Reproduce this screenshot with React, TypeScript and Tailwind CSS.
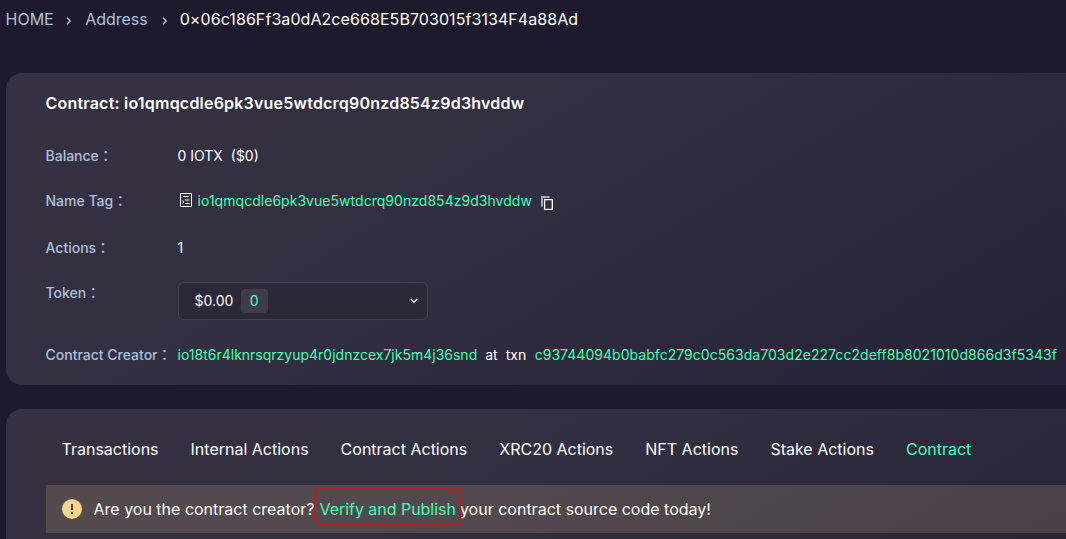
import type { ReactNode } from "react";

const TABS = ["Transactions", "Internal Actions", "Contract Actions", "XRC20 Actions", "NFT Actions", "Stake Actions", "Contract"];

function Chevron({ className }: { className: string }) {
  return (
    <svg className={className} viewBox="0 0 8 8" fill="none" stroke="currentColor" strokeWidth="1.4">
      <path d="M2 0.8 L5.2 4 L2 7.2" />
    </svg>
  );
}

function Row({ label, className, children }: { label: string; className: string; children: ReactNode }) {
  return (
    <div className={`flex whitespace-nowrap text-sm leading-5 ${className}`}>
      <div className="w-[132px] shrink-0 font-medium text-[#afc0dc]">
        {label}
        <span className="font-['Noto_Sans_CJK_TC',sans-serif] leading-none">：</span>
      </div>
      {children}
    </div>
  );
}

export default function App() {
  return (
    <div className="h-[539px] w-full overflow-hidden bg-[#1d1a2e] pl-1.5 font-['Inter','Noto_Sans_CJK_TC',sans-serif] text-white">
      <nav className="flex h-[73px] items-start pt-[7px] text-base leading-6 text-[#afc0dc]">
        <span className="-ml-[0.5px]">HOME</span>
        <Chevron className="ml-[11.5px] mr-3 mt-[10px] size-2" />
        <span className="tracking-[-0.02px]">Address</span>
        <Chevron className="ml-[13px] mr-[11px] mt-[10px] size-2" />
        <span className="tracking-[0.07px] text-white">0×06c186Ff3a0dA2ce668E5B703015f3134F4a88Ad</span>
      </nav>

      <section className="h-[312px] w-[1180px] rounded-2xl bg-[linear-gradient(149deg,#363143_0%,#312f41_40%,#2a283a_68%,#242136_100%)] pl-[39.5px] pt-[18px]">
        <h1 className="text-base font-semibold leading-6 tracking-[0.21px]">Contract: io1qmqcdle6pk3vue5wtdcrq90nzd854z9d3hvddw</h1>
        <Row label="Balance" className="mt-[31px] h-[45px]">
          <span className="whitespace-pre">0 IOTX&nbsp; ($0)</span>
        </Row>
        <Row label="Name Tag" className="h-[47px]">
          <svg className="ml-[2.5px] mt-0.5 h-[14px] w-3 shrink-0" viewBox="0 0 12 14" fill="none" stroke="white">
            <path d="M.5 .5h11v13H.5z M3 3.5h6 M5 10.5h4.5" />
            <path d="M2.3 7.8l1.7 1.2-1.7 1.2" />
            <path d="M5 7h4.5" strokeWidth="2" opacity=".5" />
          </svg>
          <span className="ml-[5.5px] tracking-[0.035px] text-[#44ffb2]">io1qmqcdle6pk3vue5wtdcrq90nzd854z9d3hvddw</span>
          <svg className="ml-[9px] mt-[5px] h-[14px] w-3 shrink-0" viewBox="0 0 12 14" fill="none" stroke="white">
            <path d="M1 10.5V1H8.5" strokeWidth="2" opacity=".6" />
            <path d="M3.6 3.6h7.7v9.7H3.6z" strokeWidth="1.3" />
          </svg>
        </Row>
        <Row label="Actions" className="h-[45px]">
          <span>1</span>
        </Row>
        <Row label="Token" className="h-[62px]">
          <button className="-mt-px ml-[0.5px] flex h-[38px] w-[250px] items-center rounded-md border border-[#454151] bg-[#2b283a] pl-[15.5px] pr-[9px]">
            <span>$0.00</span>
            <span className="ml-[7.5px] rounded bg-[#403c4d] px-[9px] py-0.5 text-[#44ffb2]">0</span>
            <Chevron className="ml-auto size-2 rotate-90" />
          </button>
        </Row>
        <Row label="Contract Creator" className="">
          <span className="text-[#44ffb2]">io18t6r4lknrsqrzyup4r0jdnzcex7jk5m4j36snd</span>
          <span className="mx-2">at</span>
          <span className="mr-[8.5px]">txn</span>
          <span className="tracking-[0.04px] text-[#44ffb2]">c93744094b0babfc279c0c563da703d2e227cc2deff8b8021010d866d3f5343f</span>
        </Row>
      </section>

      <section className="mt-6 h-[260px] w-[1180px] rounded-2xl bg-[linear-gradient(149deg,#363143_0%,#312f41_40%,#2a283a_68%,#242136_100%)] pl-10">
        <nav className="flex h-[76px] items-start gap-8 pl-[15.5px] pt-7 text-base leading-6">
          {TABS.map((tab) => (
            <span key={tab} className={tab === "Contract" ? "text-[#44ffb2]" : ""}>{tab}</span>
          ))}
        </nav>
        <div className="flex h-12 items-center bg-[#fbd38d]/16 pl-4 text-base">
          <svg className="mr-[11.5px] size-5 shrink-0" viewBox="0 0 20 20">
            <circle cx="10" cy="10" r="10" fill="#fbd38d" />
            <path d="M10 5v6" stroke="#554a4f" strokeWidth="2" />
            <circle cx="10" cy="14" r="1.2" fill="#554a4f" />
          </svg>
          <span>Are you the contract creator?</span>
          <span className="relative -top-[3px] -ml-[0.5px] flex h-[37px] w-[147px] items-center rounded-sm border-2 border-[#b51f24] pl-[3.5px] text-[#44ffb2]">
            <span className="relative top-[3px] whitespace-nowrap tracking-[-0.03px]">Verify and Publish</span>
          </span>
          <span className="-ml-px">your contract source code today!</span>
        </div>
      </section>
    </div>
  );
}
